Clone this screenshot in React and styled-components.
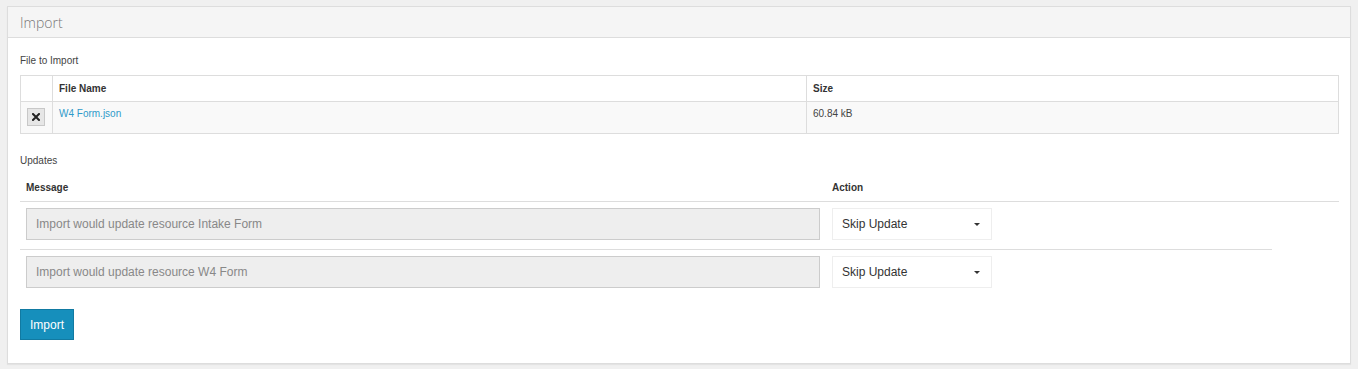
import React from 'react';
import styled, { createGlobalStyle } from 'styled-components';

const GlobalStyle = createGlobalStyle`
  body {
    margin: 0;
    padding: 6px 7px;
    background-color: #f0f0f0;
    font-family: "Liberation Sans", Arial, sans-serif;
    color: #333;
  }
`;

const Panel = styled.div`
  width: 1344px;
  box-sizing: border-box;
  background-color: #fff;
  border: 1px solid #dddddd;
  box-shadow: 0 1px 1px rgba(0, 0, 0, 0.05);
`;

const PanelHeading = styled.div`
  height: 30px;
  background-color: #f5f5f5;
  border-bottom: 1px solid #dddddd;
  display: flex;
  align-items: center;
  padding-left: 12px;
  font-family: "Open Sans", sans-serif;
  font-weight: 300;
  font-size: 14px;
  color: #777;
`;

const PanelBody = styled.div`
  padding: 16px 11px 23px 12px;
`;

const Label = styled.div`
  font-size: 10px;
  line-height: 14px;
  color: #444;
  margin-bottom: ${p => p.gap ?? 7}px;
  margin-top: ${p => p.top || 0}px;
`;

const Table = styled.table`
  width: 100%;
  border-collapse: collapse;
  font-size: 10px;
`;

const Th = styled.th`
  height: 25px;
  border: 1px solid #dddddd;
  text-align: left;
  padding: 0 6px;
  font-weight: bold;
  color: #333;
  width: ${p => p.w || 'auto'};
`;

const Td = styled.td`
  height: 25px;
  border: 1px solid #dddddd;
  background-color: #f9f9f9;
  vertical-align: top;
  padding: 6px 6px 0;
  color: #444;
`;

const RemoveButton = styled.button`
  width: 18px;
  height: 18px;
  padding: 0;
  margin: 0;
  background-color: #e6e6e6;
  border: 1px solid #c8c8c8;
  display: flex;
  align-items: center;
  justify-content: center;
  cursor: pointer;
`;

const FileLink = styled.a`
  color: #2f9ac9;
  text-decoration: none;
  font-size: 10px;
`;

const UpdatesHeader = styled.div`
  display: flex;
  padding: 13px 0 6px 6px;
  border-bottom: 1px solid #dddddd;
  font-size: 10px;
  line-height: 14px;
  font-weight: bold;
  color: #333;
`;

const HeaderCell = styled.div`
  width: ${p => p.w}px;
`;

const UpdateRow = styled.div`
  width: 1252px;
  display: flex;
  gap: 12px;
  padding: 6px 0 9px 6px;
  box-sizing: border-box;
  border-top: ${p => (p.$first ? 'none' : '1px solid #dddddd')};
`;

const MessageInput = styled.div`
  width: 794px;
  height: 32px;
  box-sizing: border-box;
  background-color: #eeeeee;
  border: 1px solid #cccccc;
  display: flex;
  align-items: center;
  padding-left: 9px;
  font-size: 12px;
  color: #888;
`;

const Select = styled.div`
  width: 160px;
  height: 32px;
  box-sizing: border-box;
  border: 1px solid #eeeeee;
  background-color: #fff;
  display: flex;
  align-items: center;
  justify-content: space-between;
  padding: 0 11px 0 9px;
  font-size: 12px;
  color: #333;
`;

const Caret = styled.span`
  width: 0;
  height: 0;
  border-left: 3px solid transparent;
  border-right: 3px solid transparent;
  border-top: 3px solid #333;
`;

const PrimaryButton = styled.button`
  margin-top: 12px;
  width: 54px;
  height: 31px;
  background-color: #168fbc;
  border: 1px solid #117aa2;
  color: #fff;
  font-family: "Liberation Sans", Arial, sans-serif;
  font-size: 12px;
  padding: 0;
  cursor: pointer;
`;

const updates = [
  'Import would update resource Intake Form',
  'Import would update resource W4 Form',
];

const App = () => {
  return (
    <>
      <GlobalStyle />
      <Panel>
        <PanelHeading>Import</PanelHeading>
        <PanelBody>
          <Label>File to Import</Label>
          <Table>
            <thead>
              <tr>
                <Th w="19px"></Th>
                <Th w="741px">File Name</Th>
                <Th>Size</Th>
              </tr>
            </thead>
            <tbody>
              <tr>
                <Td>
                  <RemoveButton aria-label="remove">
                    <svg width="8" height="8" viewBox="0 0 8 8">
                      <path d="M1 1 L7 7 M7 1 L1 7" stroke="#222" strokeWidth="2" strokeLinecap="square" />
                    </svg>
                  </RemoveButton>
                </Td>
                <Td>
                  <FileLink href="#">W4 Form.json</FileLink>
                </Td>
                <Td>60.84 kB</Td>
              </tr>
            </tbody>
          </Table>
          <Label top={20} gap={0}>Updates</Label>
          <UpdatesHeader>
            <HeaderCell w={806}>Message</HeaderCell>
            <HeaderCell w={160}>Action</HeaderCell>
          </UpdatesHeader>
          {updates.map((msg, i) => (
            <UpdateRow key={msg} $first={i === 0}>
              <MessageInput>{msg}</MessageInput>
              <Select>
                Skip Update
                <Caret />
              </Select>
            </UpdateRow>
          ))}
          <PrimaryButton>Import</PrimaryButton>
        </PanelBody>
      </Panel>
    </>
  );
};

export default App;
